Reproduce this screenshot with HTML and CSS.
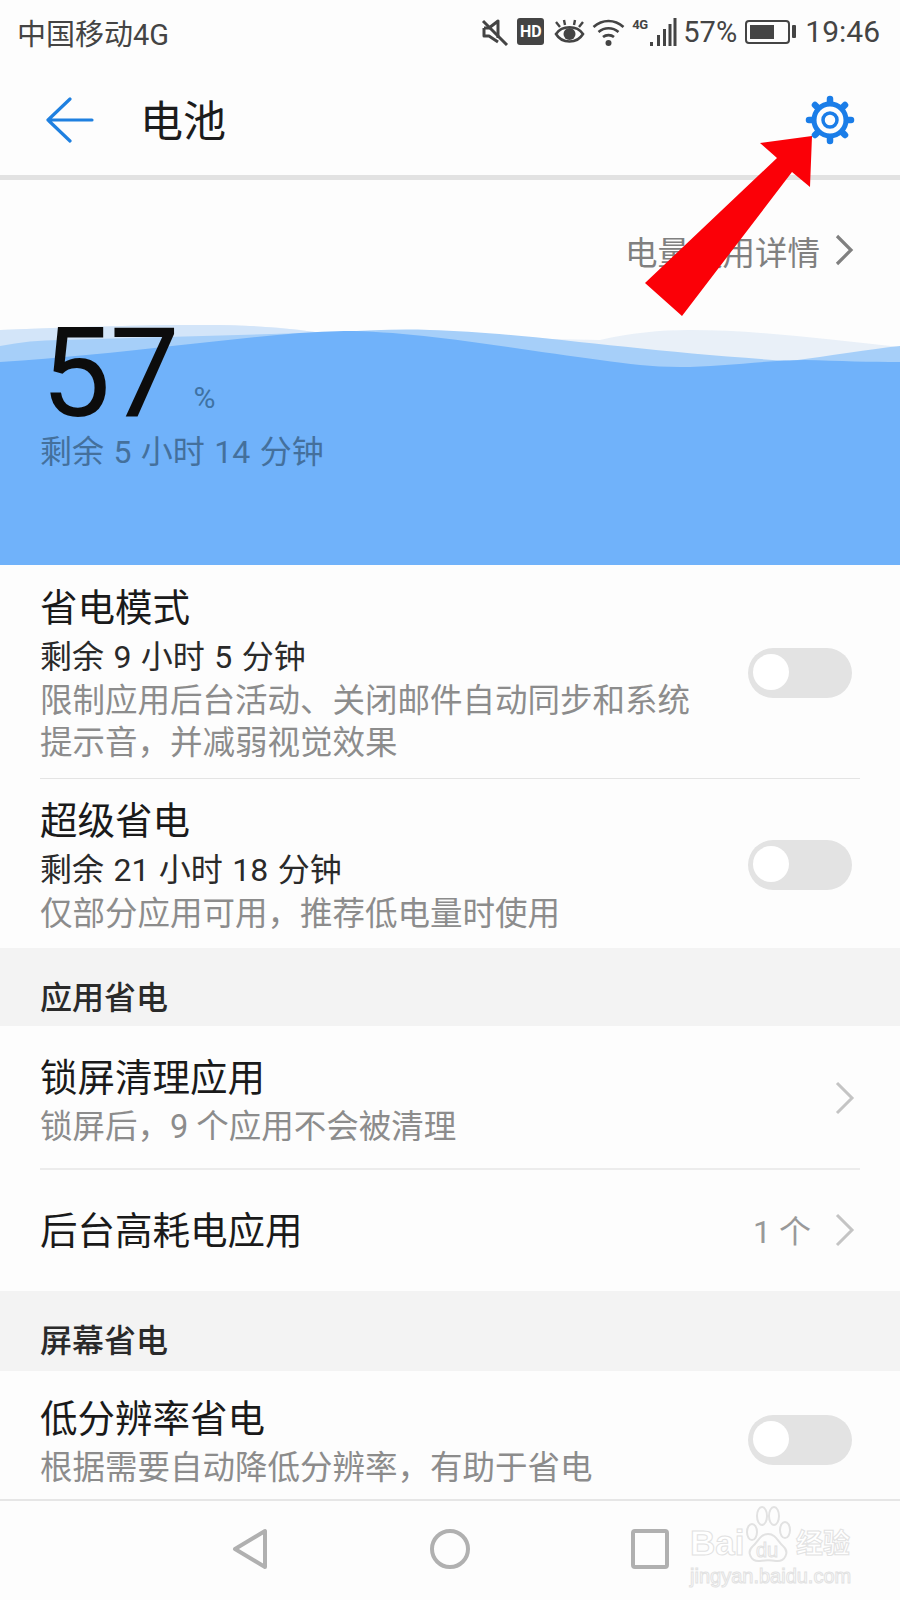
FILE: index.html
```html
<!DOCTYPE html>
<html lang="zh-CN">
<head>
    <meta charset="UTF-8">
    <meta name="viewport" content="width=device-width, initial-scale=1.0">
    <title>电池</title>
    <link rel="stylesheet" href="styles.css">
</head>
<body>

<div class="page">
    <div class="status-bar">
        <span class="carrier">中国移动4G</span>
        <div class="status-icons">
            <svg class="icon-mute" width="28" height="28" viewBox="0 0 28 28">
                <path d="M3 10h5l9-7v17M3 10v8h5l9 6" fill="none" stroke="#444" stroke-width="3" stroke-linejoin="round"/>
                <path d="M2 3l24 24" stroke="#444" stroke-width="3"/>
            </svg>
            <span class="hd">HD</span>
            <svg class="icon-eye" width="31" height="26" viewBox="0 0 31 26">
                <path d="M2 15c6-9 21-9 27 0c-6 10-21 10-27 0z" fill="none" stroke="#444" stroke-width="2.6"/>
                <circle cx="15.500" cy="15" r="6" fill="#444"/>
                <path d="M2 3l4 5M29 3l-4 5M10 1l1 5M21 1l-1 5" stroke="#444" stroke-width="2.4"/>
            </svg>
            <svg class="icon-wifi" width="33" height="28" viewBox="0 0 33 28">
                <path d="M1.500 9c9-8 21-8 30 0M6.500 14c6-5 14-5 20 0M11 19c3-2.500 8-2.500 11 0" fill="none" stroke="#444" stroke-width="2.6"/>
                <circle cx="16.500" cy="25" r="3" fill="#444"/>
            </svg>
            <div class="signal">
                <span class="net">4G</span>
                <svg width="29" height="28" viewBox="0 0 29 28">
                    <path d="M2 24h3v4H2zM9 17h3v11H9zM15 11h3v17h-3zM20.500 6h3v22h-3zM25.500 0h3v28h-3z" fill="#444"/>
                </svg>
            </div>
            <span class="level">57%</span>
            <div class="battery">
                <div class="battery-body"><div class="battery-fill"></div></div>
                <div class="battery-nub"></div>
            </div>
            <span class="clock">19:46</span>
        </div>
    </div>

    <header class="toolbar">
        <svg class="back" width="48" height="48" viewBox="0 0 48 48">
            <path d="M24 3L2 24l22 21M2 24h44" fill="none" stroke="#1f80e0" stroke-width="3.200" stroke-linecap="round" stroke-linejoin="round"/>
        </svg>
        <h1>电池</h1>
        <svg class="gear" width="52" height="52" viewBox="-26 -26 52 52">
            <g stroke="#1a7de8" stroke-width="6.500" stroke-linecap="round">
                <path d="M0-18V-21"/>
                <path d="M0 18V21"/>
                <path d="M-18 0H-21"/>
                <path d="M18 0H21"/>
                <path d="M-13-13L-15-15"/>
                <path d="M13-13L15-15"/>
                <path d="M-13 13L-15 15"/>
                <path d="M13 13L15 15"/>
            </g>
            <circle r="16" fill="#fdfdfd" stroke="#1a7de8" stroke-width="5"/>
            <circle r="7" fill="none" stroke="#1a7de8" stroke-width="3.500"/>
        </svg>
    </header>

    <section class="hero">
        <svg class="waves" width="900" height="385" viewBox="0 180 900 385">
            <path d="M0 330C70 327 140 325 207 325C250 325 290 328 330 334L600 340C630 333 660 330 689 330C760 330 830 340 900 347V370H0z" fill="#e9f0f8"/>
            <path d="M0 330C70 327 140 325 207 325C250 325 290 328 330 334L240 362H0z" fill="#d3e5f9"/>
            <path d="M0 346C20 342 40 340 60 340L340 332C370 330 400 329 430 330C520 332 640 352 790 361C830 356 870 349 900 346V375H0z" fill="#a6cff9"/>
            <path d="M0 362C60 358 120 352 172 346C230 340 290 332 344 331C420 331 520 350 600 360C630 364 650 367 680 367C720 367 770 360 804 360C840 361 870 362 900 362V565H0z" fill="#70b2fa"/>
        </svg>
        <div class="details">
            <span>电量使用详情</span>
            <svg width="20" height="32" viewBox="0 0 20 32">
                <path d="M3 2l14 14L3 30" fill="none" stroke="#808080" stroke-width="3.200"/>
            </svg>
        </div>
        <div class="percent">
            <span class="number">57</span>
            <span class="unit">%</span>
        </div>
        <p class="remaining">剩余 5 小时 14 分钟</p>
    </section>

    <div class="row row-mode">
        <div class="row-text">
            <div class="row-title">省电模式</div>
            <div class="row-time">剩余 9 小时 5 分钟</div>
            <div class="row-desc">限制应用后台活动、关闭邮件自动同步和系统<br>提示音，并减弱视觉效果</div>
        </div>
        <div class="toggle"><div class="knob"></div></div>
    </div>
    <div class="row row-super">
        <div class="row-text">
            <div class="row-title">超级省电</div>
            <div class="row-time">剩余 21 小时 18 分钟</div>
            <div class="row-desc">仅部分应用可用，推荐低电量时使用</div>
        </div>
        <div class="toggle"><div class="knob"></div></div>
    </div>

    <div class="section-title">应用省电</div>

    <div class="row row-clean">
        <div class="row-text">
            <div class="row-title">锁屏清理应用</div>
            <div class="row-desc">锁屏后，9 个应用不会被清理</div>
        </div>
        <svg class="chevron" width="20" height="34" viewBox="0 0 20 34">
            <path d="M2 2l15 15L2 32" fill="none" stroke="#c4c4c4" stroke-width="3"/>
        </svg>
    </div>
    <div class="row row-drain">
        <div class="row-text">
            <div class="row-title">后台高耗电应用</div>
        </div>
        <span class="count">1 个</span>
        <svg class="chevron" width="20" height="34" viewBox="0 0 20 34">
            <path d="M2 2l15 15L2 32" fill="none" stroke="#c4c4c4" stroke-width="3"/>
        </svg>
    </div>

    <div class="section-title section-screen">屏幕省电</div>

    <div class="row row-res">
        <div class="row-text">
            <div class="row-title">低分辨率省电</div>
            <div class="row-desc">根据需要自动降低分辨率，有助于省电</div>
        </div>
        <div class="toggle"><div class="knob"></div></div>
    </div>

    <nav class="nav-bar">
        <svg width="40" height="44" viewBox="0 0 40 44">
            <path d="M5 22L35 4v36z" fill="none" stroke="#b0b0b0" stroke-width="4" stroke-linejoin="round"/>
        </svg>
        <svg width="40" height="44" viewBox="0 0 40 44">
            <circle cx="20" cy="22" r="18" fill="none" stroke="#b0b0b0" stroke-width="4"/>
        </svg>
        <svg width="40" height="44" viewBox="0 0 40 44">
            <rect x="3" y="4" width="34" height="36" rx="2" fill="none" stroke="#b0b0b0" stroke-width="4"/>
        </svg>
    </nav>

    <!-- annotation and watermark lie over the screenshot -->
    <svg class="red-arrow" width="900" height="340" viewBox="0 0 900 340">
        <polygon points="645,283 777,158 760,143 812,136 810,187 792,172 682,316" fill="#fb0007"/>
    </svg>

    <div class="watermark">
        <div class="mark-top">
            <span class="mark-bai">Bai</span>
            <span class="mark-paw">
                <svg width="48" height="62" viewBox="0 0 48 62">
                    <g fill="none" stroke="#e2e2e2" stroke-width="2">
                        <ellipse cx="8" cy="29" rx="5" ry="8"/>
                        <ellipse cx="18" cy="13" rx="5" ry="9"/>
                        <ellipse cx="30" cy="13" rx="5" ry="9"/>
                        <ellipse cx="41" cy="27" rx="5" ry="8"/>
                        <path d="M24 31c-8 0-10 8-15 12c-7 6-2 16 7 15c5-1 11-1 16 0c9 1 14-9 7-15c-5-4-7-12-15-12z"/>
                    </g>
                </svg>
                <span class="mark-du">du</span>
            </span>
            <span class="mark-jy">经验</span>
        </div>
        <div class="mark-url">jingyan.baidu.com</div>
    </div>
</div>

</body>
</html>
```

FILE: styles.css
```css
* {
    box-sizing: border-box;
}
body {
    margin: 0;
    padding: 0;
    background-color: #fdfdfd;
    font-family: Roboto, "Noto Sans CJK SC", sans-serif;
    color: #222;
}
.page {
    position: relative;
    width: 900px;
    height: 1600px;
    overflow: hidden;
}

/* status bar */
.status-bar {
    display: flex;
    justify-content: space-between;
    align-items: center;
    height: 60px;
    padding: 3px 20px 0 17px;
    color: #444;
}
.carrier {
    font-size: 29px;
}
.status-icons {
    display: flex;
    align-items: center;
}
.icon-mute {
    margin-right: 8px;
}
.hd {
    width: 27px;
    height: 27px;
    margin-right: 10px;
    background-color: #444;
    border-radius: 3px;
    color: #fff;
    font-size: 16px;
    font-weight: 700;
    line-height: 27px;
    text-align: center;
}
.icon-eye {
    margin-right: 7px;
}
.icon-wifi {
    margin-right: 7px;
}
.signal {
    display: flex;
    align-items: flex-start;
    width: 45px;
    height: 28px;
    margin-right: 6px;
}
.net {
    width: 16px;
    font-size: 13px;
    font-weight: 700;
    line-height: 13px;
    letter-spacing: -0.5px;
}
.level {
    width: 62px;
    font-size: 29px;
}
.battery {
    display: flex;
    align-items: center;
    width: 60px;
}
.battery-body {
    width: 45px;
    height: 24px;
    padding: 3px;
    border: 2px solid #444;
    border-radius: 4px;
}
.battery-fill {
    width: 24px;
    height: 100%;
    background-color: #444;
}
.battery-nub {
    width: 4px;
    height: 13px;
    margin-left: 2px;
    background-color: #444;
    border-radius: 1px;
}
.clock {
    font-size: 30px;
}

/* toolbar */
.toolbar {
    display: flex;
    align-items: center;
    height: 120px;
    padding: 4px 44px 0 46px;
    border-bottom: 5px solid #e2e2e2;
}
.toolbar h1 {
    flex: 1;
    margin: 0 0 4px 46px;
    font-size: 43px;
    font-weight: 400;
    color: #1c1c1c;
}

/* hero */
.hero {
    position: relative;
    height: 385px;
    padding: 0 40px;
    background-color: #fdfdfd;
}
.waves {
    position: absolute;
    left: 0;
    top: 0;
}
.details {
    position: relative;
    display: flex;
    justify-content: flex-end;
    align-items: center;
    height: 140px;
    padding: 0 6px 0 0;
    color: #808080;
    font-size: 32.5px;
}
.details svg {
    margin-left: 14px;
}
.percent {
    position: relative;
    display: flex;
    align-items: flex-end;
    height: 108px;
    padding-left: 1px;
}
.number {
    font-size: 124px;
    line-height: 108px;
    letter-spacing: -1px;
    color: #0c0c0c;
}
.unit {
    margin: 0 0 14px 15px;
    font-size: 30px;
    line-height: 32px;
    color: #3f72a3;
}
.remaining {
    position: relative;
    margin: 3px 0 0;
    font-size: 32px;
    line-height: 42px;
    word-spacing: 1.5px;
    color: #44709c;
}

/* rows */
.row {
    display: flex;
    align-items: center;
    margin: 0 40px;
}
.row-text {
    flex: 1;
}
.row-title {
    padding-bottom: 4px;
    font-size: 37.5px;
    line-height: 44px;
    color: #1a1a1a;
}
.row-time {
    font-size: 32px;
    line-height: 46px;
    word-spacing: 1.5px;
    color: #2a2a2a;
}
.row-desc {
    font-size: 32.5px;
    line-height: 42px;
    color: #8c8c8c;
}
.row-mode {
    padding: 21px 0 14px;
    border-bottom: 1px solid #e4e4e4;
}
.row-super {
    padding: 20px 0 13px;
}
.row-clean {
    padding: 30px 0 18px;
    border-bottom: 2px solid #ececec;
}
.row-clean .row-desc,
.row-res .row-desc {
    line-height: 46px;
}
.row-clean .chevron {
    margin-bottom: 10px;
}
.row-drain {
    height: 121px;
    padding-top: 5px;
}
.row-drain .chevron {
    margin-bottom: 6px;
}
.row-res {
    padding: 26px 0 8px;
}
.row-res .toggle {
    margin-bottom: 8px;
}

.section-title {
    height: 78px;
    padding: 30px 40px 0;
    background-color: #f3f3f3;
    font-size: 32px;
    font-weight: 500;
    line-height: 40px;
    color: #2a2a2a;
}
.section-screen {
    height: 80px;
}

.toggle {
    width: 104px;
    height: 50px;
    margin: 0 8px 4px 0;
    padding: 6px 0 0 5px;
    background-color: #e3e3e3;
    border-radius: 25px;
}
.knob {
    width: 36px;
    height: 36px;
    background-color: #fff;
    border-radius: 50%;
}
.chevron {
    margin-right: 5px;
}
.count {
    margin: 0 24px 8px 0;
    font-size: 32px;
    color: #999;
}

/* nav bar */
.nav-bar {
    display: flex;
    justify-content: center;
    gap: 160px;
    height: 100px;
    padding-top: 26px;
    border-top: 2px solid #e6e6e6;
}

/* overlays */
.red-arrow {
    position: absolute;
    left: 0;
    top: 0;
}
.watermark {
    position: absolute;
    left: 690px;
    top: 1503px;
    width: 165px;
    color: #fff;
    -webkit-text-stroke: 1px #e2e2e2;
}
.mark-top {
    display: flex;
    align-items: flex-end;
    height: 62px;
}
.mark-bai {
    width: 54px;
    font-family: "Liberation Sans", sans-serif;
    font-size: 35px;
    font-weight: 700;
    line-height: 44px;
}
.mark-paw {
    position: relative;
    width: 48px;
    height: 62px;
}
.mark-du {
    position: absolute;
    left: 12px;
    top: 36px;
    font-family: "Liberation Sans", sans-serif;
    font-size: 20px;
    line-height: 22px;
}
.mark-jy {
    margin-left: 4px;
    font-size: 27px;
    font-weight: 700;
    line-height: 42px;
    white-space: nowrap;
}
.mark-url {
    font-family: "Liberation Sans", sans-serif;
    font-size: 20px;
    line-height: 22px;
}
```
